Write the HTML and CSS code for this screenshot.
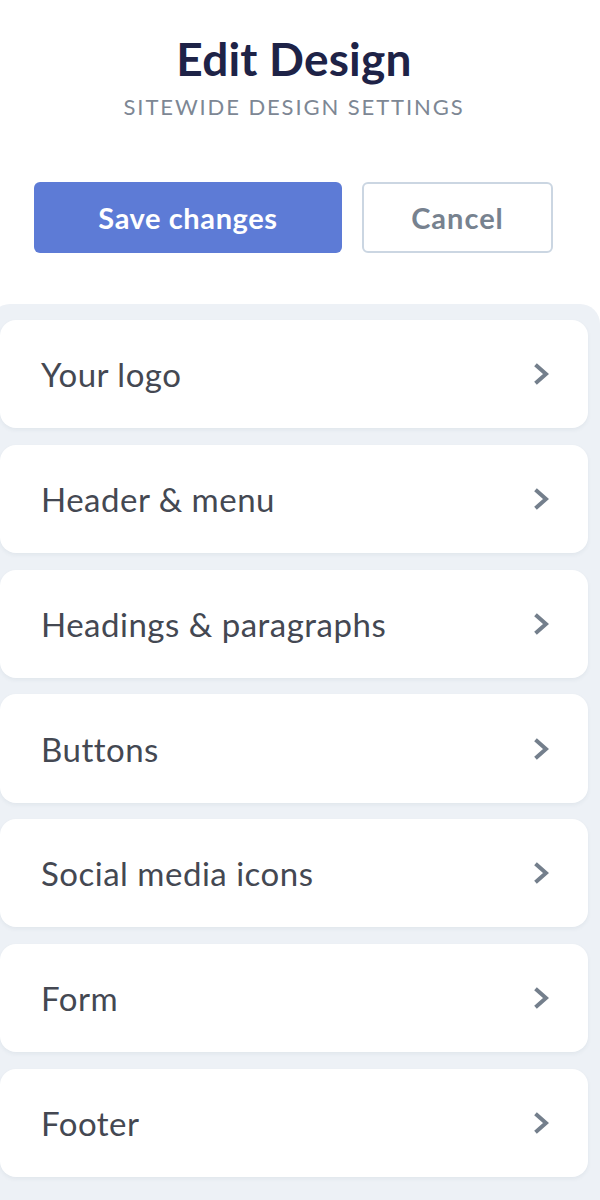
FILE: index.html
```html
<!DOCTYPE html>
<html lang="en">
<head>
  <meta charset="UTF-8">
  <title>Edit Design</title>
  <link rel="stylesheet" href="styles.css">
</head>
<body>
  <div class="sidebar">
    <header class="head">
      <h1>Edit Design</h1>
      <p class="sub">Sitewide design settings</p>
    </header>

    <div class="actions">
      <button class="btn btn-save" type="button">Save changes</button>
      <button class="btn btn-cancel" type="button">Cancel</button>
    </div>

    <div class="panel">
      <a class="item" href="#"><span>Your logo</span><svg class="chev" viewBox="0 0 16 22"><path d="M2.5 1.8 13 11 2.5 20.2"/></svg></a>
      <a class="item" href="#"><span>Header &amp; menu</span><svg class="chev" viewBox="0 0 16 22"><path d="M2.5 1.8 13 11 2.5 20.2"/></svg></a>
      <a class="item" href="#"><span>Headings &amp; paragraphs</span><svg class="chev" viewBox="0 0 16 22"><path d="M2.5 1.8 13 11 2.5 20.2"/></svg></a>
      <a class="item" href="#"><span>Buttons</span><svg class="chev" viewBox="0 0 16 22"><path d="M2.5 1.8 13 11 2.5 20.2"/></svg></a>
      <a class="item" href="#"><span>Social media icons</span><svg class="chev" viewBox="0 0 16 22"><path d="M2.5 1.8 13 11 2.5 20.2"/></svg></a>
      <a class="item" href="#"><span>Form</span><svg class="chev" viewBox="0 0 16 22"><path d="M2.5 1.8 13 11 2.5 20.2"/></svg></a>
      <a class="item" href="#"><span>Footer</span><svg class="chev" viewBox="0 0 16 22"><path d="M2.5 1.8 13 11 2.5 20.2"/></svg></a>
    </div>
  </div>
</body>
</html>
```

FILE: styles.css
```css
*{box-sizing:border-box;}
body{margin:0;background:#fff;font-family:Lato,"Open Sans",sans-serif;overflow:hidden;}
.sidebar{width:600px;}
.head{width:588px;text-align:center;padding-top:33px;}
h1{margin:0;font-size:46px;line-height:52px;font-weight:700;color:#1e2347;letter-spacing:0.2px;}
.sub{margin:8px 0 0;font-size:22px;line-height:28px;font-weight:400;color:#7d8794;text-transform:uppercase;letter-spacing:1.9px;}
.actions{width:588px;display:flex;gap:20px;padding:0 35px 0 34px;margin-top:61px;}
.btn{height:71px;border-radius:6px;font-family:inherit;font-size:29px;font-weight:700;cursor:pointer;}
.btn-save{width:308px;background:#5d7bd6;border:0;color:#fff;letter-spacing:0.6px;}
.btn-cancel{flex:1;background:#fff;border:2px solid #cbd6e2;color:#77828f;letter-spacing:1px;}
.panel{margin:51px 0 0 -10px;width:610px;background:#edf1f6;border-radius:20px 20px 0 0;padding:16px 12px 24px 10px;display:flex;flex-direction:column;gap:16.5px;}
.item{display:flex;align-items:center;justify-content:space-between;height:108.3px;padding:0 39px 0 41px;background:#fff;border-radius:16px;box-shadow:0 2px 4px rgba(40,60,90,0.06);text-decoration:none;color:#444852;font-size:33px;letter-spacing:0.5px;}
.chev{width:16px;height:22px;fill:none;stroke:#747f8c;stroke-width:4;}
```
